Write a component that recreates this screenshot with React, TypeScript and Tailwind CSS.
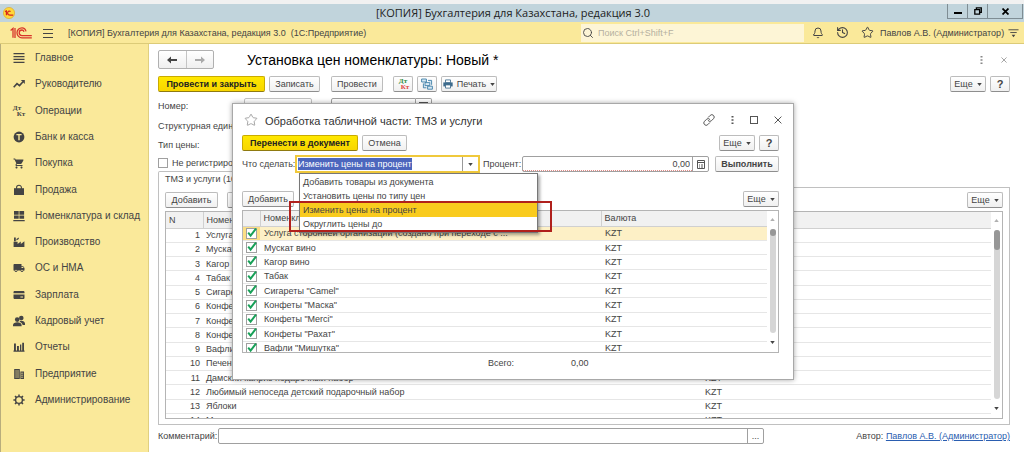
import React from 'react';
import { Bell, History, Search, Star } from 'lucide-react';
import { MdLocalShipping, MdShoppingCart } from 'react-icons/md';

const goods = [
  'Услуга сторонней организации (создано при переходе с ...',
  'Мускат вино',
  'Кагор вино',
  'Табак',
  'Сигареты "Camel"',
  'Конфеты "Маска"',
  'Конфеты "Merci"',
  'Конфеты "Рахат"',
  'Вафли "Мишутка"',
  'Печенье "Юбилейное"',
  'Дамский каприз подарочный набор',
  'Любимый непоседа детский подарочный набор',
  'Яблоки',
  'Мандарины',
];

const actions = [
  'Добавить товары из документа',
  'Установить цены по типу цен',
  'Изменить цены на процент',
  'Округлить цены до',
];

function DtKt({ color = false }: { color?: boolean }) {
  return (
    <span className="flex flex-col font-['Liberation_Serif',serif] text-[7px] leading-[6px] font-bold">
      <span className={color ? 'text-[#2e8b3d]' : ''}>Дт</span>
      <span className={color ? 'pl-1 text-[#e0433a]' : 'pl-1'}>Кт</span>
    </span>
  );
}

function Glyph({ children }: { children: React.ReactNode }) {
  return (
    <svg viewBox="0 0 12 12" className="h-3 w-3" fill="currentColor">
      {children}
    </svg>
  );
}

const sections = [
  {
    label: 'Главное',
    icon: <Glyph><path d="M.5 1h11v1.3H.5zM.5 3.9h11v1.3H.5zM.5 6.8h11v1.3H.5zM.5 9.7h11V11H.5z" /></Glyph>,
  },
  {
    label: 'Руководителю',
    icon: (
      <Glyph>
        <path d="M.7 9.2 4 5.6l2.5 2L10 3.8" fill="none" stroke="currentColor" strokeWidth="1.6" />
        <path d="M7.8 2h4v4z" />
      </Glyph>
    ),
  },
  { label: 'Операции', icon: <DtKt /> },
  {
    label: 'Банк и касса',
    icon: (
      <Glyph>
        <circle cx="6" cy="6" r="5.4" />
        <path d="M3.4 3h5.2v1.3H6.7v5H5.3v-5H3.4z" fill="#fae99a" />
      </Glyph>
    ),
  },
  { label: 'Покупка', icon: <MdShoppingCart className="h-[13px] w-[13px]" /> },
  {
    label: 'Продажа',
    icon: (
      <Glyph>
        <path d="M1 4.2h10V11H1z" />
        <path d="M3.6 6V3.4C3.6.6 8.4.6 8.4 3.4V6" fill="none" stroke="currentColor" strokeWidth="1.1" />
      </Glyph>
    ),
  },
  {
    label: 'Номенклатура и склад',
    icon: <Glyph><path d="M1 1h4.7v3.7H1zM6.4 1h4.7v3.7H6.4zM1 5.4h4.7v3.4H1zM6.4 5.4h4.7v3.4H6.4zM.3 10h11.4v1.2H.3z" /></Glyph>,
  },
  {
    label: 'Производство',
    icon: <Glyph><path d="M.6 11V5.8h4V8l3.200-2.600V8l3.600-2.800V11zM1 1.6h1.8v3.6H1zM3.4 3l2.400-1.600v1.5L3.4 4.6z" /></Glyph>,
  },
  { label: 'ОС и НМА', icon: <MdLocalShipping className="h-[14px] w-[14px]" /> },
  {
    label: 'Зарплата',
    icon: <Glyph><path d="M1.200 2h9.600l.7.7v1.500H.5V2.700zM.5 5.600h11v3.700l-.7.7H1.200l-.7-.7zM7.400 7.600v.9h2.600v-.9z" fillRule="evenodd" /></Glyph>,
  },
  {
    label: 'Кадровый учет',
    icon: (
      <Glyph>
        <circle cx="8.300" cy="3" r="2.300" />
        <path d="M6.600 6c2.500-.8 5.400.2 5.400 2.600V10H9.600C9.500 8.600 8.500 7.600 7 7z" />
        <circle cx="4.200" cy="4.600" r="2.300" />
        <path d="M0 11.200V10c0-3.600 8.600-3.600 8.600 0v1.200z" />
      </Glyph>
    ),
  },
  {
    label: 'Отчеты',
    icon: <Glyph><path d="M1 2.4h1.9v7H1zM4 5h1.9v4.4H4zM7 3.6h1.3v5.8H7zM9.2 1.8H11v7.6H9.2zM.5 9.6h11v1.2H.5z" /></Glyph>,
  },
  {
    label: 'Предприятие',
    icon: (
      <Glyph>
        <path d="M1.2 1h5.6v10H1.2zM7.4 3.4H11V11H7.4z" />
        <path d="M2.2 3h3.8M2.2 5h3.8M2.2 7h3.8M2.2 9h3.8M8 5.2h2.2M8 7.2h2.2M8 9.2h2.2" stroke="#fae99a" strokeWidth=".7" />
      </Glyph>
    ),
  },
  {
    label: 'Администрирование',
    icon: (
      <Glyph>
        <circle cx="6" cy="6" r="3.4" fill="none" stroke="currentColor" strokeWidth="1.4" />
        <path
          d="M6 .4v2M6 9.6v2M.4 6h2M9.6 6h2M2 2l1.4 1.4M8.6 8.6 10 10M2 10l1.4-1.4M8.6 3.4 10 2"
          stroke="currentColor"
          strokeWidth="1.5"
        />
      </Glyph>
    ),
  },
];

function Caret({ up = false }: { up?: boolean }) {
  return (
    <svg viewBox="0 0 6 4" className="h-[3px] w-[5px] shrink-0" fill={up ? '#b0b0b0' : '#444'}>
      <path d={up ? 'M0 4h6L3 0z' : 'M0 0h6L3 4z'} />
    </svg>
  );
}

type ButtonProps = React.ButtonHTMLAttributes<HTMLButtonElement> & { primary?: boolean };

function Button({ primary, className = '', children, ...rest }: ButtonProps) {
  const tone = primary
    ? 'border-[#c9ab00] border-b-[#8f7a10] from-[#ffe800] to-[#f8d600] font-bold text-[#222]'
    : 'border-[#bcbcbc] border-b-[#8e8e8e] from-white to-[#f0f0f0] text-[#444]';
  return (
    <button
      type="button"
      className={`flex h-4 shrink-0 items-center justify-center gap-1 rounded-[2px] border bg-linear-to-b whitespace-nowrap ${tone} ${className}`}
      {...rest}
    >
      {children}
    </button>
  );
}

function MoreButton() {
  return (
    <Button className="w-9">
      Еще <Caret />
    </Button>
  );
}

function HelpButton() {
  return <Button className="w-5 text-[11px] font-bold">?</Button>;
}

function Dots() {
  return (
    <svg viewBox="0 0 3 10" className="h-[10px] w-[3px]" fill="currentColor">
      <path d="M.5 1h2v1.6h-2zM.5 4.2h2v1.6h-2zM.5 7.4h2V9h-2z" />
    </svg>
  );
}

function Cross({ className }: { className: string }) {
  return (
    <svg viewBox="0 0 8 8" className={className} stroke="currentColor" fill="none">
      <path d="M.6.6l6.8 6.8M7.4.6.6 7.4" />
    </svg>
  );
}

function ScrollBar({ thumb }: { thumb: string }) {
  return (
    <div className="flex w-[11px] shrink-0 flex-col items-center pt-[7px] pb-2">
      <Caret up />
      <div className="my-2 w-[6px] flex-1 rounded-full bg-[#d6d6d6]">
        <div className={`w-[6px] rounded-full bg-[#979797] ${thumb}`} />
      </div>
      <Caret />
    </div>
  );
}

function TitleBar() {
  return (
    <div className="flex h-[18px] items-start bg-[#c1d4dc]">
      <div className="flex h-full flex-1 items-center pl-[3px]">
        <svg viewBox="0 0 12 12" className="h-3 w-3">
          <circle cx="6" cy="6" r="5.6" fill="#ffd83a" stroke="#e0a92c" strokeWidth=".7" />
          <path d="M2 4.6 3.4 4v4.2M7.6 4.6C6 3.4 4.6 4.6 4.6 6s1.4 2.2 2.6 2.2h3" fill="none" stroke="#d7261c" strokeWidth="1.2" />
        </svg>
      </div>
      <h1 className="font-['Open_Sans',sans-serif] text-[11px] leading-[17px] text-[#222]">
        [КОПИЯ] Бухгалтерия для Казахстана, редакция 3.0
      </h1>
      <div className="flex flex-1 justify-end pr-px">
        <div className="flex h-[15px] divide-x divide-[#7f8d94] border border-t-0 border-[#7f8d94] text-black">
          <button type="button" aria-label="Свернуть" className="flex w-5 items-center justify-center pt-1">
            <span className="h-[2px] w-2 bg-black" />
          </button>
          <button type="button" aria-label="Восстановить" className="flex w-5 items-center justify-center">
            <svg viewBox="0 0 8 8" className="h-2 w-2" fill="none" stroke="currentColor" strokeWidth="1.3">
              <path d="M2.4 2.2V.8h4.9v4.6H6M.8 2.6h4.8v4.6H.8z" />
            </svg>
          </button>
          <button type="button" aria-label="Закрыть" className="flex w-[34px] items-center justify-center">
            <Cross className="h-[7px] w-[7px] stroke-2" />
          </button>
        </div>
      </div>
    </div>
  );
}

function AppBar() {
  return (
    <header className="flex h-[22px] items-center border-b border-[#dccb78] bg-[#fae99a] pr-[5px] pl-[10px] text-[9px] text-[#444]">
      <svg viewBox="0 0 22 12" className="h-3 w-[22px] shrink-0" fill="none" stroke="#d8352a" strokeWidth="1.3">
        <path d="M.6 3.4 3 1.4v9.4M5 11V1" />
        <path d="M16 4.4C15.400 1.800 13.600.8 12 .8a5 5 0 0 0 0 10h9.800" />
        <path d="M14 4.800C13.600 3.600 12.800 3 12 3a2.800 2.800 0 0 0 0 5.600h9.800" />
      </svg>
      <button type="button" aria-label="Меню" className="ml-[11px]">
        <svg viewBox="0 0 10 10" className="h-[10px] w-[10px]" stroke="currentColor">
          <path d="M0 1.500h10M0 5.500h10M0 9.500h10" />
        </svg>
      </button>
      <span className="ml-[15px] flex-1 whitespace-pre">
        [КОПИЯ] Бухгалтерия для Казахстана, редакция 3.0  (1С:Предприятие)
      </span>
      <label className="flex h-[18px] w-[223px] items-center gap-1 bg-[#fdf5d6] pl-px">
        <Search className="h-3 w-3 shrink-0" strokeWidth={1.8} />
        <input
          type="text"
          aria-label="Поиск"
          placeholder="Поиск Ctrl+Shift+F"
          className="min-w-0 flex-1 outline-none placeholder:text-[#b5b0a0]"
        />
      </label>
      <div className="flex items-center gap-3 pl-2">
        <button type="button" aria-label="Уведомления"><Bell className="h-3 w-3" /></button>
        <button type="button" aria-label="История"><History className="h-[13px] w-[13px]" /></button>
        <button type="button" aria-label="Избранное"><Star className="h-[13px] w-[13px]" strokeWidth={1.8} /></button>
      </div>
      <span className="ml-[6px] w-[128px] whitespace-nowrap">Павлов А.В. (Администратор)</span>
      <button type="button" aria-label="Настройки">
        <svg viewBox="0 0 12 10" className="h-[10px] w-[11px]" stroke="currentColor">
          <path d="M.5 1.500h11M2.500 4.500h7" />
          <path d="M4 7h4L6 9.500z" fill="currentColor" stroke="none" />
        </svg>
      </button>
    </header>
  );
}

function Sidebar() {
  return (
    <nav className="w-[149px] shrink-0 border-r border-l border-r-[#e0d080] border-l-[#b8ad7c] bg-[#fae99a] pt-px">
      <ul className="grid h-[368px] auto-rows-fr text-[10px] text-[#444]">
        {sections.map((section) => (
          <li key={section.label} className="flex items-center">
            <a href="#" className="flex items-center gap-[10px] pl-3">
              <span className="flex w-3 items-center justify-center">{section.icon}</span>
              {section.label}
            </a>
          </li>
        ))}
      </ul>
    </nav>
  );
}

function GoodsTable() {
  return (
    <div className="flex h-[208px] overflow-hidden border border-[#b4b4b4]">
      <div className="min-w-0 flex-1">
        <table className="h-[216px] w-full table-fixed border-collapse">
          <thead>
            <tr className="h-4 border-b border-[#d0d0d0] bg-[#f1f1f1] text-left">
              <th className="w-[37px] border-r border-[#d0d0d0] px-[3px] py-0 font-normal">N</th>
              <th className="p-0 pl-[3px] font-normal">Номенклатура</th>
              <th className="w-[286px] p-0 font-normal">Валюта</th>
            </tr>
          </thead>
          <tbody>
            {goods.map((name, i) => (
              <tr key={name} className="border-b border-[#e6e6e6]">
                <td className="p-0 pr-[3px] text-right">{i + 1}</td>
                <td className="truncate p-0 pl-[3px]">{name}</td>
                <td className="p-0">KZT</td>
              </tr>
            ))}
          </tbody>
        </table>
      </div>
      <ScrollBar thumb="h-5" />
    </div>
  );
}

function ProcessingTable() {
  return (
    <div className="flex h-[143px] overflow-hidden border border-[#b4b4b4]">
      <div className="min-w-0 flex-1">
        <table className="h-[145px] w-full table-fixed border-collapse">
          <thead>
            <tr className="h-[15px] border-b border-[#d0d0d0] bg-[#f1f1f1] text-left">
              <th className="w-[17px] border-r border-[#d0d0d0] p-0" />
              <th className="p-0 pl-[3px] font-normal">Номенклатура</th>
              <th className="w-[166px] border-l border-[#d0d0d0] p-0 pl-[3px] font-normal">Валюта</th>
            </tr>
          </thead>
          <tbody>
            {goods.slice(0, 9).map((name, i) => (
              <tr key={name} className={`border-b border-[#e6e6e6] ${i === 0 ? 'bg-[#fdf0c6]' : ''}`}>
                <td className={`p-0 pl-[3px] ${i === 0 ? 'bg-[#fbdf86]' : ''}`}>
                  <label className="relative block h-[11px] w-[11px]">
                    <input
                      type="checkbox"
                      defaultChecked
                      aria-label={name}
                      className="peer block h-[11px] w-[11px] appearance-none border border-[#a0a0a0] bg-white"
                    />
                    <svg
                      viewBox="0 0 11 11"
                      className="absolute inset-0 hidden overflow-visible peer-checked:block"
                      fill="none"
                      stroke="#18a058"
                      strokeWidth="2"
                    >
                      <path d="M2.200 4.600 4.600 7.600 10 .6" />
                    </svg>
                  </label>
                </td>
                <td className="truncate p-0 pl-[4px]">{name}</td>
                <td className="p-0 pl-[4px]">KZT</td>
              </tr>
            ))}
          </tbody>
        </table>
      </div>
      <ScrollBar thumb="h-[7px]" />
    </div>
  );
}

function ActionField() {
  return (
    <div className="relative w-[185px] shrink-0">
      <div className="flex h-[18px] border-2 border-[#f0c93c] bg-white">
        <input
          id="action"
          type="text"
          role="combobox"
          aria-expanded="true"
          aria-controls="action-list"
          defaultValue="Изменить цены на процент"
          autoFocus
          onFocus={(e) => e.target.select()}
          className="min-w-0 flex-1 pl-px outline-none selection:bg-[#4c66bd] selection:text-white"
        />
        <button type="button" aria-label="Открыть список" className="flex w-4 items-center justify-center border-l border-[#999]">
          <Caret />
        </button>
      </div>
      <ul
        id="action-list"
        role="listbox"
        className="absolute top-[18px] left-1 z-10 w-[239px] border border-[#777] bg-white py-px shadow-[2px_2px_3px_rgba(0,0,0,0.35)]"
      >
        {actions.map((action, i) => (
          <li
            key={action}
            role="option"
            aria-selected={i === 2}
            className="h-[14px] pl-[3px] leading-[14px] aria-selected:bg-[#f9cb1e]"
          >
            {action}
          </li>
        ))}
      </ul>
      {/* frame around the price actions */}
      <div className="pointer-events-none absolute top-[46px] -left-[6px] z-20 h-[31px] w-[263px] border-2 border-[#b0201c]" />
    </div>
  );
}

function ProcessingDialog() {
  return (
    <section
      role="dialog"
      aria-label="Обработка табличной части"
      className="absolute top-[59px] left-[83px] z-10 w-[562px] border border-[#a8a8a8] bg-white px-[9px] pb-[6px] shadow-[0_0_5px_rgba(0,0,0,0.35)]"
    >
      <div className="flex h-[31px] items-center pr-[2px] text-[#555]">
        <Star className="ml-[2px] h-[14px] w-[14px] text-[#999]" strokeWidth={1.5} />
        <h2 className="ml-[7px] flex-1 pt-[2px] text-[11px] text-[#333]">
          Обработка табличной части: ТМЗ и услуги
        </h2>
        <div className="flex items-center gap-4">
          <button type="button" aria-label="Ссылка">
            <svg viewBox="0 0 12 12" className="h-3 w-3" fill="none" stroke="currentColor" strokeLinecap="round">
              <path d="M5.400 3.200 7.200 1.400a2.300 2.300 0 0 1 3.300 3.300L8.500 6.700a2.300 2.300 0 0 1-3.300 0" />
              <path d="M6.600 8.800 4.800 10.600a2.300 2.300 0 0 1-3.300-3.300L3.500 5.300a2.300 2.300 0 0 1 3.300 0" />
            </svg>
          </button>
          <button type="button" aria-label="Действия"><Dots /></button>
          <button type="button" aria-label="Развернуть" className="h-2 w-2 border border-[#555]" />
          <button type="button" aria-label="Закрыть окно"><Cross className="h-2 w-2" /></button>
        </div>
      </div>
      <div className="flex gap-1 pr-[5px]">
        <Button primary className="w-[116px]">Перенести в документ</Button>
        <Button className="w-[45px]">Отмена</Button>
        <span className="flex-1" />
        <MoreButton />
        <HelpButton />
      </div>
      <div className="flex items-center pt-[4px] pr-[5px]">
        <label htmlFor="action" className="w-[53px] whitespace-nowrap">Что сделать:</label>
        <ActionField />
        <label htmlFor="percent" className="ml-[3px] w-[39px]">Процент:</label>
        <div className="flex h-4 min-w-0 flex-1 rounded-[2px] border border-[#a0a0a0]">
          <input
            id="percent"
            type="text"
            defaultValue="0,00"
            className="min-w-0 flex-1 border-b border-dotted border-[#e08a86] pr-[2px] text-right outline-none"
          />
          <button type="button" aria-label="Калькулятор" className="flex w-4 items-center justify-center border-l border-[#a0a0a0]">
            <svg viewBox="0 0 8 9" className="h-[9px] w-2" fill="none" stroke="#555">
              <path d="M.5.5h7v8h-7zM.5 2.500h7M2 5h1M4 5h2M2 7h1M4 7h2" />
            </svg>
          </button>
        </div>
        <Button className="ml-[6px] w-16 font-bold">Выполнить</Button>
      </div>
      <div className="flex justify-between pt-[18px] pr-[5px] pb-[3px]">
        <Button className="w-[52px]">Добавить</Button>
        <MoreButton />
      </div>
      <div className="pr-[5px]">
        <ProcessingTable />
      </div>
      <div className="flex h-5 items-center pl-[246px]">
        <span className="w-[83px]">Всего:</span>
        <output>0,00</output>
      </div>
    </section>
  );
}

function DocumentForm() {
  return (
    <main className="relative min-w-0 flex-1 bg-white pr-[14px] pl-[9px] text-[9px] text-[#444]">
      <div className="flex h-[31px] items-center">
        <div className="flex h-[19px] w-[56px] divide-x divide-[#c4c4c4] rounded-[2px] border border-[#b0b0b0] bg-linear-to-b from-white to-[#efefef]">
          <button type="button" aria-label="Назад" className="flex flex-1 items-center justify-center text-[#444]">
            <svg viewBox="0 0 10 8" className="h-2 w-[10px]" fill="currentColor"><path d="M0 4 4 .6V3h6v2H4v2.400z" /></svg>
          </button>
          <button type="button" aria-label="Вперед" className="flex flex-1 items-center justify-center text-[#aaa]">
            <svg viewBox="0 0 10 8" className="h-2 w-[10px]" fill="currentColor"><path d="M10 4 6 .6V3H0v2h6v2.400z" /></svg>
          </button>
        </div>
        <h2 className="ml-[33px] flex-1 text-[14px] text-black">Установка цен номенклатуры: Новый *</h2>
        <div className="flex items-center gap-[18px] pr-[3px] text-[#888]">
          <button type="button" aria-label="Действия формы"><Dots /></button>
          <button type="button" aria-label="Закрыть форму"><Cross className="h-[6px] w-[6px]" /></button>
        </div>
      </div>

      <div className="flex gap-1 pt-px">
        <Button primary className="w-[107px]">Провести и закрыть</Button>
        <Button className="w-[51px]">Записать</Button>
        <Button className="ml-[7px] w-[52px]">Провести</Button>
        <Button className="ml-[6px] w-5" aria-label="Движения"><DtKt color /></Button>
        <Button className="w-5" aria-label="Структура подчиненности">
          <svg viewBox="0 0 12 12" className="h-3 w-3" fill="#d7e9f5" stroke="#3f80a8" strokeWidth=".9">
            <path d="M.6 1h4.800v3H.6zM4 4.600h4.800v3H4zM6.600 8.200h4.800v3H6.600zM7 2.400h3.600v4.400M2.400 5.400v4.400h3" />
          </svg>
        </Button>
        <Button className="w-[56px]">
          <svg viewBox="0 0 12 11" className="h-[10px] w-[10px] shrink-0">
            <path d="M3 .6h6V4H3z" fill="#fff" stroke="#3c6a8c" />
            <path d="M.4 3.600h11.200V8.400H.4z" fill="#3c6a8c" />
            <path d="M3 6.600h6v3.800H3z" fill="#fff" stroke="#3c6a8c" />
          </svg>
          Печать <Caret />
        </Button>
        <span className="flex-1" />
        <MoreButton />
        <HelpButton />
      </div>

      <div className="flex h-6 items-center pt-1">
        <label htmlFor="number" className="w-[86px]">Номер:</label>
        <input id="number" type="text" className="h-4 w-[68px] rounded-[2px] border border-[#c4c4c4]" />
        <input
          type="text"
          aria-label="Дата"
          defaultValue="18.05.2023  0:00:00"
          className="ml-[19px] h-4 w-[85px] rounded-l-[2px] border border-[#a0a0a0] px-[2px]"
        />
        <button type="button" aria-label="Календарь" className="h-4 w-4 rounded-r-[2px] border border-l-0 border-[#a0a0a0] p-[3px]">
          <span className="block h-2 border border-t-2 border-[#555]" />
        </button>
      </div>
      <div className="flex h-[19px] items-center">Структурная единица:</div>
      <div className="flex h-[19px] items-center">Тип цены:</div>
      <label className="flex h-[17px] items-center gap-1">
        <input type="checkbox" className="h-[10px] w-[10px] appearance-none border border-[#a0a0a0] bg-white" />
        Не регистрировать цены
      </label>

      <div className="flex">
        <span className="-mb-px h-[17px] rounded-t-[2px] border border-b-0 border-[#c0c0c0] bg-white px-[6px] leading-[15px]">
          ТМЗ и услуги (101)
        </span>
      </div>
      <div className="border border-[#c0c0c0] px-[6px] pt-1 pb-[5px]">
        <div className="flex gap-[9px] pb-[3px]">
          <Button className="w-[53px]">Добавить</Button>
          <Button className="w-[60px]">Заполнить</Button>
          <span className="flex-1" />
          <MoreButton />
        </div>
        <GoodsTable />
      </div>

      <div className="flex items-center pt-[3px]">
        <label htmlFor="comment" className="w-[60px]">Комментарий:</label>
        <div className="flex h-4 w-[546px] rounded-[2px] border border-[#a0a0a0]">
          <input id="comment" type="text" className="min-w-0 flex-1 outline-none" />
          <button type="button" aria-label="Выбрать" className="w-4 border-l border-[#a0a0a0] leading-[12px]">...</button>
        </div>
        <span className="flex-1 text-right">
          Автор: <a href="#" className="text-[#2a5db0] underline">Павлов А.В. (Администратор)</a>
        </span>
      </div>

      <ProcessingDialog />
    </main>
  );
}

export default function App() {
  return (
    <div className="flex min-h-screen flex-col border-t-4 border-[#f1f1f1] font-['Liberation_Sans',Arial,sans-serif] leading-[12px]">
      <TitleBar />
      <AppBar />
      <div className="flex flex-1">
        <Sidebar />
        <DocumentForm />
      </div>
    </div>
  );
}
